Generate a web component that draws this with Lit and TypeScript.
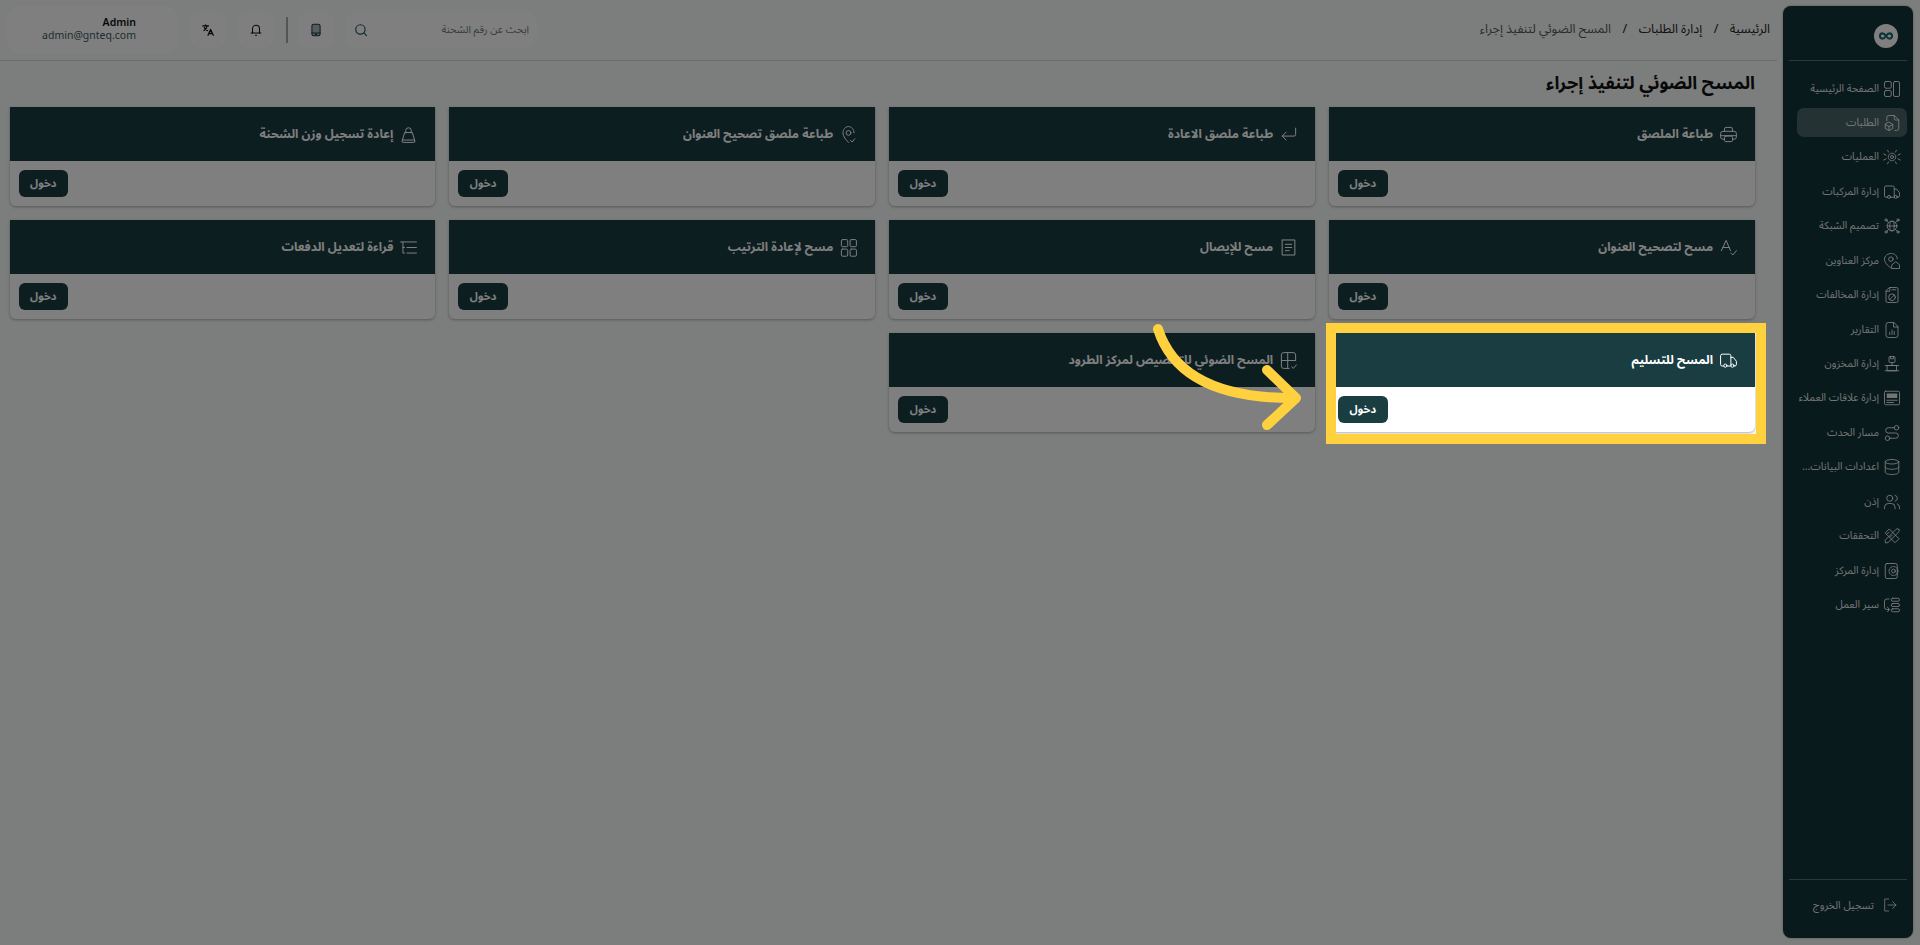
import { LitElement, html, css, svg } from "lit";
import { customElement } from "lit/decorators.js";

const ic = (body: unknown, cls = "ic") => html`<svg class=${cls} viewBox="0 0 24 24" fill="none" stroke="currentColor" stroke-width="1.25" stroke-linecap="round" stroke-linejoin="round">${body}</svg>`;

const I: Record<string, unknown> = {
  printer: svg`<path d="M7 8V5a2 2 0 0 1 2-2h6a2 2 0 0 1 2 2v3"/><path d="M7 18H5a3 3 0 0 1-3-3v-4a3 3 0 0 1 3-3h14a3 3 0 0 1 3 3v4a3 3 0 0 1-3 3h-2"/><rect x="7" y="14" width="10" height="7" rx="1.5"/><path d="M3 13.5h18" />`,
  ret: svg`<path d="M21 4v8a2 2 0 0 1-2 2H4"/><path d="M9 9l-5 5 5 5"/>`,
  pin: svg`<path d="M19 10c0-4.400-3.100-8-7-8s-7 3.600-7 8c0 4.500 4 9 7 12"/><circle cx="12" cy="10" r="3"/><path d="M14.500 19.500l2 2 3.500-4"/>`,
  bag: svg`<path d="M7 10l-3 10a1.500 1.500 0 0 0 1.500 2h13a1.500 1.500 0 0 0 1.500-2l-3-10z"/><path d="M8.500 10V7a3.500 3.500 0 0 1 7 0v3"/><path d="M4.500 19h15"/>`,
  spell: svg`<path d="M3 16L9 3l5.500 13"/><path d="M5 12h8"/><path d="M15 19l2.500 2.500L22 16"/>`,
  receipt: svg`<path d="M4 2.500h16v19H4z" stroke-dasharray="2 .6"/><path d="M8 8h8M8 12h8M8 16h5"/>`,
  grid: svg`<rect x="3" y="2" width="8" height="9" rx="1.500"/><rect x="14" y="2" width="8" height="9" rx="1.500"/><rect x="3" y="14" width="8" height="9" rx="1.500"/><rect x="14" y="14" width="8" height="9" rx="1.500"/>`,
  list: svg`<path d="M2 5H22M10 12H22M10 19H22" /><path d="M5 5v14h2M5 12h2"/>`,
  layout: svg`<path d="M21 12V5a3 3 0 0 0-3-3H6a3 3 0 0 0-3 3v14a3 3 0 0 0 3 3h7"/><path d="M3 12h18M11 2v20"/><path d="M16 20l2 2 4-4.500"/>`,
  truck: svg`<path d="M6 19H4a2 2 0 0 1-2-2V6a2 2 0 0 1 2-2h9a2 2 0 0 1 2 2v13H10"/><path d="M15 8h3l4 5v4a2 2 0 0 1-2 2h-1"/><circle cx="8" cy="18.500" r="2"/><circle cx="17" cy="18.500" r="2"/>`,
  dash: svg`<rect x="2" y="2" width="9" height="9" rx="2"/><rect x="2" y="14" width="9" height="8" rx="2"/><rect x="14" y="2" width="8" height="20" rx="2"/>`,
  box: svg`<path d="M5 9V5a3 3 0 0 1 3-3h7l6 6v11a3 3 0 0 1-3 3h-2"/><path d="M15 2v4a2 2 0 0 0 2 2h4"/><path d="M8 11l5 2.800v5.500l-5 2.700-5-2.700v-5.500z"/><path d="M3 14l5 2.700 5-2.700M8 16.700V22"/>`,
  ops: svg`<circle cx="12" cy="12" r="2"/><circle cx="12" cy="12" r="5" stroke-dasharray="2.500 1.400"/><path d="M1 8l3 1.500M23 8l-3 1.500M1 16l3-1.500M23 16l-3-1.500M6 3l1.500 2.500M18 3l-1.500 2.500M6 21l1.500-2.500M18 21l-1.500-2.500"/>`,
  net: svg`<circle cx="12" cy="12" r="6.500"/><ellipse cx="12" cy="12" rx="3" ry="6.500"/><path d="M5.500 12h13"/><circle cx="4" cy="4" r="1.500"/><circle cx="20" cy="4" r="1.500"/><circle cx="4" cy="20" r="1.500"/><circle cx="20" cy="20" r="1.500"/><path d="M5 5l2.500 2.500M19 5l-2.500 2.500M5 19l2.500-2.500M19 19l-2.500-2.500"/>`,
  addr: svg`<path d="M19 9c0-4-3.400-7-8-7S2 5 2 9.500C2 14 6 18 10 21"/><circle cx="10.500" cy="9.500" r="3"/><path d="M12 17l5-4 5 4v5H12z"/>`,
  viol: svg`<path d="M9 2h9a2 2 0 0 1 2 2v16a2 2 0 0 1-2 2H6a2 2 0 0 1-2-2V7z"/><path d="M9 2v5H4"/><circle cx="12" cy="15" r="4.500"/><path d="M9 18l6-6"/><path d="M12 5h5" />`,
  rep: svg`<path d="M14 2H7a3 3 0 0 0-3 3v14a3 3 0 0 0 3 3h10a3 3 0 0 0 3-3V8z"/><path d="M14 2v6h6"/><path d="M9 18v-3M12 18v-6M15 18v-4"/>`,
  stock: svg`<rect x="8" y="2" width="8" height="8" rx="1.500"/><path d="M10 2v3h4V2"/><path d="M12 10v4"/><path d="M6 14h12v7H6z"/><path d="M3 14h18M3 21h18"/>`,
  crm: svg`<rect x="2" y="3" width="20" height="18" rx="1.500"/><rect x="5" y="6" width="14" height="6" fill="currentColor" stroke-width="0"/><path d="M5 15h14M5 18h9"/>`,
  route: svg`<circle cx="6" cy="19" r="3"/><circle cx="18" cy="5" r="3"/><path d="M9 19h8a3.500 3.500 0 0 0 0-7H7a3.500 3.500 0 0 1 0-7h8"/>`,
  db: svg`<ellipse cx="12" cy="5" rx="9" ry="3"/><path d="M3 5v14c0 1.700 4 3 9 3s9-1.300 9-3V5"/><path d="M3 12c0 1.700 4 3 9 3s9-1.300 9-3"/>`,
  users: svg`<circle cx="9" cy="7" r="4"/><path d="M2 21v-2a5 5 0 0 1 5-5h4a5 5 0 0 1 5 5v2"/><path d="M16 3.100a4 4 0 0 1 0 7.800"/><path d="M22 21v-2a5 5 0 0 0-3-4.600"/>`,
  tools: svg`<path d="M8 3L3 8l13 13 5-5z"/><path d="M21 3a2.500 2.500 0 0 0-3.500 0L3 17.500V21h3.500L21 6.500A2.500 2.500 0 0 0 21 3z"/><path d="M6 9l2-2M10 13l2-2"/>`,
  hub: svg`<rect x="3" y="2" width="16" height="20" rx="2.500" /><circle cx="14" cy="12" r="2.500"/><circle cx="14" cy="12" r="6" stroke-dasharray="3 1.500"/>`,
  flow: svg`<rect x="11" y="3" width="11" height="4" rx="2"/><rect x="11" y="10" width="11" height="4" rx="2"/><rect x="11" y="17" width="11" height="4" rx="2"/><path d="M8 4H5a3 3 0 0 0-3 3v8a3 3 0 0 0 3 3h3"/><path d="M6 15l2.500 3L6 21" />`,
  logout: svg`<path d="M10 3H4v18h6"/><path d="M9 12h12"/><path d="M16 7l5 5-5 5"/>`,
  bell: svg`<path d="M6 17V10a6 6 0 0 1 12 0v7" stroke-width="1.800"/><path d="M3.500 17h17" stroke-width="1.800"/><path d="M11 21h2" stroke-width="1.800"/>`,
  trans: svg`<path d="M3 5h10M8 3v2M5 13c3-1.500 5-4.500 5.500-8M5.500 7.500c1 2.500 3 4.500 6 5.500" stroke-width="2"/><path d="M12 21l4.500-10 4.500 10M13.500 18h6" stroke-width="2.200"/>`,
  tablet: svg`<rect x="5" y="2" width="14" height="20" rx="3" fill="currentColor" fill-opacity=".35" stroke-width="1.800"/><path d="M5 17h14M11 19.500h2" stroke-width="1.800"/>`,
  search: svg`<circle cx="11" cy="11" r="8" stroke-width="2"/><path d="M17 17l4.500 4.500" stroke-width="2"/>`,
};

const NAV: [string, string][] = [
  ["dash", "الصفحة الرئيسية"], ["box", "الطلبات"], ["ops", "العمليات"], ["truck", "إدارة المركبات"],
  ["net", "تصميم الشبكة"], ["addr", "مركز العناوين"], ["viol", "إدارة المخالفات"], ["rep", "التقارير"],
  ["stock", "إدارة المخزون"], ["crm", "إدارة علاقات العملاء"], ["route", "مسار الحدث"], ["db", "اعدادات البيانات..."],
  ["users", "إذن"], ["tools", "التحققات"], ["hub", "إدارة المركز"], ["flow", "سير العمل"],
];

const CARDS: [string, string][] = [
  ["printer", "طباعة الملصق"], ["ret", "طباعة ملصق الاعادة"], ["pin", "طباعة ملصق تصحيح العنوان"], ["bag", "إعادة تسجيل وزن الشحنة"],
  ["spell", "مسح لتصحيح العنوان"], ["receipt", "مسح للإيصال"], ["grid", "مسح لإعادة الترتيب"], ["list", "قراءة لتعديل الدفعات"],
  ["truck", "المسح للتسليم"], ["layout", "المسح الضوئي للتخصيص لمركز الطرود"],
];

@customElement("app-root")
export class AppRoot extends LitElement {
  static styles = css`
    :host { display: block; position: relative; width: 1920px; height: 945px; overflow: hidden; background: #f8fbfa; font-family: "Noto Sans", "Noto Sans Arabic", "DejaVu Sans", sans-serif; color: #111; }
    .page { display: flex; height: 945px; direction: rtl; }
    .side { flex: none; width: 130px; margin: 6px 7px 7px 6px; background: #13353a; border-radius: 8px; display: flex; flex-direction: column; color: #fff; box-sizing: border-box; padding: 0 6px; box-shadow: 0 0 2px rgba(0,0,0,.4); }
    .logo-row { height: 55px; display: flex; align-items: center; padding: 6px 9px 0; box-sizing: border-box; flex: none; border-bottom: 1px solid rgba(255,255,255,.3); }
    .logo { width: 24px; height: 24px; border-radius: 50%; background: #fff; color: #1a6a70; display: flex; align-items: center; justify-content: center; }
    .logo svg { width: 14px; height: 14px; }
    .nav { display: flex; flex-direction: column; gap: 5.450px; padding: 13px 0 0 8px; flex: 1; }
    .item { height: 29px; display: flex; align-items: center; gap: 4px; padding: 0 6px 0 0; border-radius: 7px; font-size: 10.500px; white-space: nowrap; color: rgba(255,255,255,.9); min-width: 0; }
    .item.on { background: rgba(255,255,255,.24); }
    .ic { width: 18px; height: 18px; flex: none; }
    .foot { border-top: 1px solid rgba(255,255,255,.3); height: 59px; display: flex; align-items: flex-start; gap: 8px; padding: 17px 9px 0 0; box-sizing: border-box; font-size: 10.600px; line-height: 16px; color: rgba(255,255,255,.9); margin-top: auto; flex: none; }
    .foot .ic { width: 16px; height: 16px; }
    .main { flex: 1; min-width: 0; display: flex; flex-direction: column; }
    .top { height: 61px; flex: none; border-bottom: 1px solid #d6dad9; display: flex; align-items: flex-start; justify-content: space-between; padding: 0 7px; box-sizing: border-box; }
    .crumbs { display: flex; align-items: center; gap: 11.500px; font-size: 12.500px; line-height: 20px; color: #222; margin-top: 19px; }
    .crumbs .cur { color: #555; }
    .tools { display: flex; align-items: center; direction: ltr; gap: 12px; margin-top: 6px; }
    .user { width: 171px; height: 48px; box-sizing: border-box; background: #ffffff; border-radius: 14px; padding: 0 42px 3px 0; display: flex; flex-direction: column; justify-content: center; align-items: flex-end; font-size: 10.500px; line-height: 13px; color: #3d5a5e; }
    .user b { color: #111; font-weight: 600; }
    .tbtn { width: 36px; height: 36px; background: #fff; border-radius: 10px; display: flex; align-items: center; justify-content: center; color: #111; }
    .tbtn .ic { width: 14px; height: 14px; }
    .tbtn.teal { color: #1a3d42; }
    .sep { width: 2px; height: 26px; background: #a9adac; margin-right: -2px; }
    .search { width: 191px; height: 36px; background: #fff; border-radius: 10px; display: flex; align-items: center; justify-content: space-between; direction: rtl; padding: 0 8px 0 8px; box-sizing: border-box; font-size: 10.400px; color: #6a7a7a; }
    .search .ic { width: 14px; height: 14px; color: #1a5a60; }
    .content { padding: 0 22px 0 9.500px; }
    h1 { margin: 0; font-size: 18px; font-weight: 700; height: 46px; line-height: 42px; color: #111; }
    .grid { display: grid; grid-template-columns: repeat(4, 1fr); gap: 14px; }
    .card { height: 99px; background: #fff; border-radius: 0 0 6px 6px; box-shadow: 0 1px 3px rgba(0,0,0,.3); display: flex; flex-direction: column; overflow: hidden; }
    .head { height: 54px; flex: none; background: #1a3d42; color: #fff; display: flex; align-items: center; gap: 6px; padding: 0 17px; font-size: 12.200px; font-weight: 700; }
    .head .ic { width: 19px; height: 19px; }
    .body { flex: 1; display: flex; justify-content: flex-end; padding: 9px; }
    button { all: unset; width: 49.500px; height: 27px; border-radius: 6px; background: #1a3d42; color: #fff; font-size: 11px; font-weight: 700; display: flex; align-items: center; justify-content: center; box-sizing: border-box; }
    .spot { position: absolute; left: 1326px; top: 323px; width: 440px; height: 121px; box-sizing: border-box; border: 10px solid #ffd13f; box-shadow: 0 0 0 3000px rgba(0,0,0,.5); }
    .arrow { position: absolute; left: 0; top: 0; width: 1920px; height: 945px; pointer-events: none; }
    .arrow path { fill: none; stroke: #ffd13f; stroke-width: 10; stroke-linecap: round; stroke-linejoin: round; }
  `;

  render() {
    return html`
      <div class="page">
        <aside class="side">
          <div class="logo-row"><div class="logo"><svg viewBox="0 0 24 24" fill="none" stroke="currentColor" stroke-width="3.500"><path d="M12 12c-2-3-4-4.500-6-4.500a4.500 4.500 0 0 0 0 9c2 0 4-1.500 6-4.500s4-4.500 6-4.500a4.500 4.500 0 0 1 0 9c-2 0-4-1.500-6-4.500z"/></svg></div></div>
          <nav class="nav">
            ${NAV.map(([i, t], n) => html`<div class="item ${n === 1 ? "on" : ""}">${ic(I[i])}<span>${t}</span></div>`)}
          </nav>
          <div class="foot">${ic(I.logout)}<span>تسجيل الخروج</span></div>
        </aside>
        <div class="main">
          <header class="top">
            <div class="crumbs"><span>الرئيسية</span><span>/</span><span>إدارة الطلبات</span><span>/</span><span class="cur">المسح الضوئي لتنفيذ إجراء</span></div>
            <div class="tools">
              <div class="user"><b>Admin</b><span>admin@gnteq.com</span></div>
              <div class="tbtn">${ic(I.trans)}</div>
              <div class="tbtn">${ic(I.bell)}</div>
              <div class="sep"></div>
              <div class="tbtn teal">${ic(I.tablet)}</div>
              <div class="search"><span>ابحث عن رقم الشحنة</span>${ic(I.search)}</div>
            </div>
          </header>
          <div class="content">
            <h1>المسح الضوئي لتنفيذ إجراء</h1>
            <div class="grid">
              ${CARDS.map((c) => html`<div class="card"><div class="head">${ic(I[c[0]])}<span>${c[1]}</span></div><div class="body"><button>دخول</button></div></div>`)}
            </div>
          </div>
        </div>
      </div>
      <div class="spot"></div>
      <svg class="arrow" viewBox="0 0 1920 945"><path d="M1158 329 Q1180 398 1292 398"/><path d="M1267 370 L1296 398 L1267 425"/></svg>
    `;
  }
}
